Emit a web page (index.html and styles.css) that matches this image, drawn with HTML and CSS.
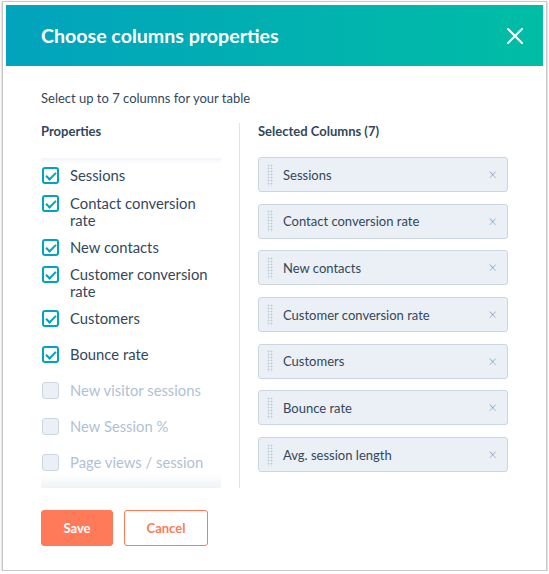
FILE: index.html
```html
<!DOCTYPE html>
<html>
<head>
<meta charset="utf-8">
<link rel="stylesheet" href="styles.css">
</head>
<body>
<div class="modal">
  <div class="header">
    <h1 class="title">Choose columns properties</h1>
    <svg class="close" width="16" height="16" viewBox="0 0 16 16"><path d="M1 1L15 15M15 1L1 15" stroke="#fff" stroke-width="2" stroke-linecap="round"/></svg>
  </div>
  <div class="content">
    <p class="intro">Select up to 7 columns for your table</p>
    <div class="columns">
      <div class="left">
        <h2 class="heading">Properties</h2>
        <div class="list">
          <div class="item first"><span class="cb on"></span><span class="label">Sessions</span></div>
          <div class="item"><span class="cb on"></span><span class="label">Contact conversion rate</span></div>
          <div class="item"><span class="cb on"></span><span class="label">New contacts</span></div>
          <div class="item"><span class="cb on"></span><span class="label">Customer conversion rate</span></div>
          <div class="item wide"><span class="cb on"></span><span class="label">Customers</span></div>
          <div class="item wide"><span class="cb on"></span><span class="label">Bounce rate</span></div>
          <div class="item wide off"><span class="cb"></span><span class="label">New visitor sessions</span></div>
          <div class="item wide off"><span class="cb"></span><span class="label">New Session %</span></div>
          <div class="item wide off"><span class="cb"></span><span class="label">Page views / session</span></div>
        </div>
      </div>
      <div class="divider"></div>
      <div class="right">
        <h2 class="heading">Selected Columns (7)</h2>
        <div class="pills">
          <div class="pill"><span class="handle"></span><span class="pill-text">Sessions</span><span class="x">×</span></div>
          <div class="pill"><span class="handle"></span><span class="pill-text">Contact conversion rate</span><span class="x">×</span></div>
          <div class="pill"><span class="handle"></span><span class="pill-text">New contacts</span><span class="x">×</span></div>
          <div class="pill"><span class="handle"></span><span class="pill-text">Customer conversion rate</span><span class="x">×</span></div>
          <div class="pill"><span class="handle"></span><span class="pill-text">Customers</span><span class="x">×</span></div>
          <div class="pill"><span class="handle"></span><span class="pill-text">Bounce rate</span><span class="x">×</span></div>
          <div class="pill"><span class="handle"></span><span class="pill-text">Avg. session length</span><span class="x">×</span></div>
        </div>
      </div>
    </div>
    <div class="buttons">
      <button class="btn save">Save</button>
      <button class="btn cancel">Cancel</button>
    </div>
  </div>
</div>
</body>
</html>
```

FILE: styles.css
```css
* { box-sizing: border-box; }
html, body { margin: 0; padding: 0; background: #ffffff; }
body { font-family: Lato, "Open Sans", sans-serif; color: #33475b; }

.modal {
  margin: 1px 0 0 2px;
  width: 545px;
  height: 570px;
  border: 1px solid #c9c9c9;
  box-shadow: 0 1px 2px rgba(0,0,0,0.35);
  padding: 3px;
  background: #fff;
  display: flex;
  flex-direction: column;
}

.header {
  height: 61px;
  flex: none;
  background: linear-gradient(90deg, #02a3bd 0%, #00bda5 100%);
  display: flex;
  align-items: center;
  justify-content: space-between;
  padding: 0 20px 0 35px;
}
.title {
  margin: 0;
  color: #fff;
  font-size: 19.6px;
  font-weight: 700;
  line-height: 24px;
}
.close { display: block; }

.content { padding: 24px 32px 0 35px; }
.intro { margin: 0; font-size: 13px; line-height: 16px; }

.columns {
  margin-top: 17px;
  display: flex;
  height: 365px;
}
.left { width: 180px; flex: none; }
.divider { width: 1px; background: #dfe3eb; margin: 0 18px; flex: none; }
.right { width: 250px; flex: none; }

.heading {
  margin: 0;
  font-size: 13px;
  font-weight: 700;
  line-height: 16px;
}

.list {
  margin-top: 19px;
  height: 330px;
  padding: 9px 0 0 1px;
  background:
    linear-gradient(180deg, rgba(234,240,246,0.7) 0, rgba(255,255,255,0) 6px),
    linear-gradient(0deg, rgba(234,240,246,0.8) 0, rgba(255,255,255,0) 14px);
}
.item {
  display: flex;
  align-items: flex-start;
  font-size: 14.8px;
  line-height: 17px;
  margin-bottom: 10px;
}
.item.first { margin-bottom: 11px; }
.item.wide { margin-bottom: 19px; }
.cb {
  flex: none;
  width: 17px;
  height: 17px;
  margin-right: 11px;
  border-radius: 3px;
  border: 1px solid #cbd6e2;
  background: #eaf0f6;
  position: relative;
}
.cb.on {
  border: 2px solid #00a4bd;
  background: #fff;
}
.cb.on::after {
  content: "";
  position: absolute;
  left: 3.5px;
  top: 0.5px;
  width: 4px;
  height: 8px;
  border-right: 2.5px solid #00a4bd;
  border-bottom: 2.5px solid #00a4bd;
  transform: rotate(45deg);
  transform-origin: center;
}
.item.off .label { color: #b0c1d4; }

.pills {
  margin-top: 18px;
  display: flex;
  flex-direction: column;
  gap: 11.7px;
}
.pill {
  height: 35px;
  display: flex;
  align-items: center;
  background: #eaf0f6;
  border: 1px solid #cbd6e2;
  border-radius: 3px;
  padding: 0 10px 0 8px;
  font-size: 13px;
}
.handle {
  width: 6px;
  height: 22px;
  flex: none;
  background-image: radial-gradient(circle, #c3cfdc 0.9px, transparent 1.1px);
  background-size: 3px 3px;
  margin-right: 10px;
}
.pill-text { flex: 1; }
.x {
  color: #7c98b6;
  font-size: 15px;
  line-height: 1;
  font-weight: 300;
}

.buttons {
  margin-top: 22px;
  display: flex;
  gap: 11px;
}
.btn {
  height: 36px;
  border-radius: 3px;
  font-family: Lato, sans-serif;
  font-size: 13px;
  font-weight: 700;
  padding: 0;
  cursor: pointer;
}
.save {
  width: 72px;
  background: #ff7a59;
  border: 1px solid #ff7a59;
  color: #fff;
}
.cancel {
  width: 84px;
  background: #fff;
  border: 1px solid #ff7a59;
  color: #ff7a59;
}
```
